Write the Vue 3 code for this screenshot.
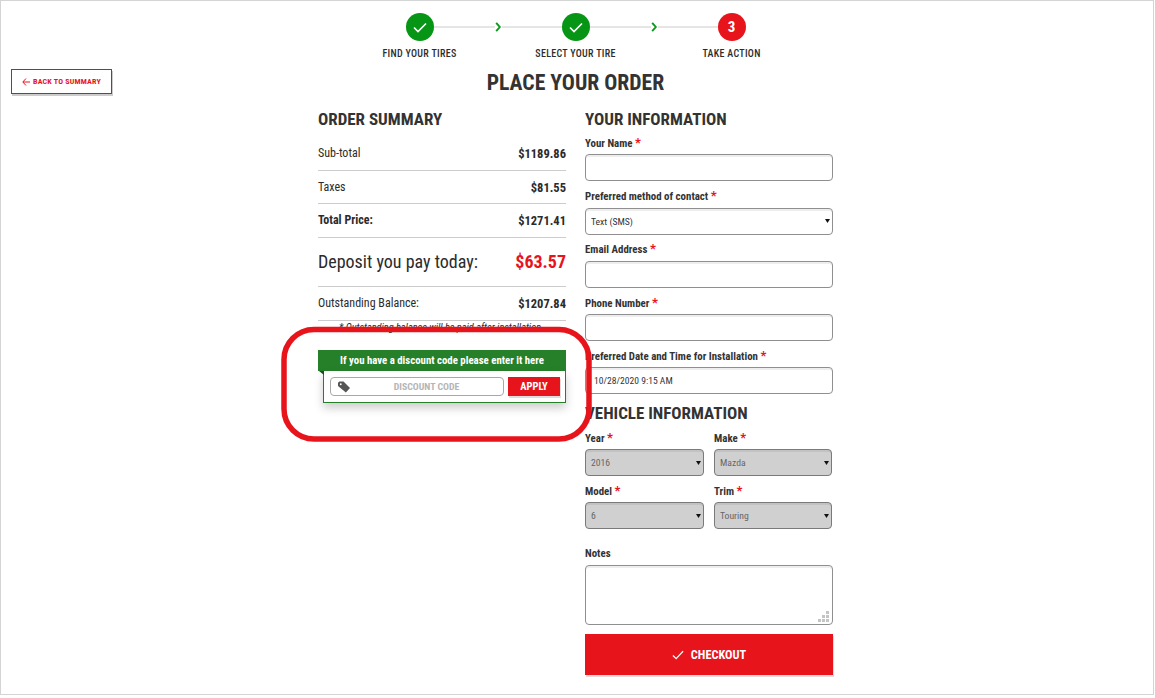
<template>
  <div class="page">
    <div class="steps">
      <div class="step">
        <span class="dot done"><svg width="14" height="11" viewBox="0 0 14 11"><path d="M1 5.500 5 9.500 13 1.500" fill="none" stroke="#fff" stroke-width="1.600" /></svg></span>
        <span class="step-name">FIND YOUR TIRES</span>
        <svg class="chevron" width="7" height="10" viewBox="0 0 7 10"><path d="M1.200 .8 4.800 5 1.200 9.200" fill="none" stroke="#0a9a1a" stroke-width="1.900" /></svg>
      </div>
      <div class="step">
        <span class="dot done"><svg width="14" height="11" viewBox="0 0 14 11"><path d="M1 5.500 5 9.500 13 1.500" fill="none" stroke="#fff" stroke-width="1.600" /></svg></span>
        <span class="step-name">SELECT YOUR TIRE</span>
        <svg class="chevron" width="7" height="10" viewBox="0 0 7 10"><path d="M1.200 .8 4.800 5 1.200 9.200" fill="none" stroke="#0a9a1a" stroke-width="1.900" /></svg>
      </div>
      <div class="step">
        <span class="dot now">3</span>
        <span class="step-name">TAKE ACTION</span>
      </div>
    </div>

    <div class="title-row">
      <button class="back">
        <svg width="8" height="8" viewBox="0 0 8 8"><path d="M4 .5.8 4 4 7.500M1 4h7" fill="none" stroke="#e8141c" stroke-width="1" /></svg>
        BACK TO SUMMARY
      </button>
      <h1>PLACE YOUR ORDER</h1>
    </div>

    <div class="columns">
      <section class="summary">
        <h2>ORDER SUMMARY</h2>
        <div class="row" v-for="r in rows" :key="r.name" :class="r.cls">
          <span class="row-name">{{ r.name }}</span>
          <span class="row-value">{{ r.value }}</span>
        </div>
        <p class="note">* Outstanding balance will be paid after installation</p>

        <div class="discount">
          <div class="discount-head">If you have a discount code please enter it here</div>
          <div class="discount-body">
            <div class="code">
              <svg width="12" height="12" viewBox="0 0 13 12"><path d="M0 1.500 1.500 0H6l7 7-4.500 5L0 5Z" fill="#555" /><circle cx="3" cy="3" r="1" fill="#fff" /></svg>
              <input placeholder="DISCOUNT CODE" />
            </div>
            <button class="apply">APPLY</button>
          </div>
        </div>
      </section>

      <section class="info">
        <h2>YOUR INFORMATION</h2>
        <label class="field">
          <span>Your Name <i>*</i></span>
          <input type="text" />
        </label>
        <label class="field">
          <span>Preferred method of contact <i>*</i></span>
          <select><option>Text (SMS)</option></select>
        </label>
        <label class="field">
          <span>Email Address <i>*</i></span>
          <input type="text" />
        </label>
        <label class="field">
          <span>Phone Number <i>*</i></span>
          <input type="text" />
        </label>
        <label class="field">
          <span>Preferred Date and Time for Installation <i>*</i></span>
          <input type="text" class="date" value="10/28/2020 9:15 AM" />
        </label>

        <h2 class="second">VEHICLE INFORMATION</h2>
        <div class="pair">
          <label class="field" v-for="s in vehicle" :key="s.name">
            <span>{{ s.name }} <i>*</i></span>
            <select class="locked" disabled><option>{{ s.value }}</option></select>
          </label>
        </div>

        <label class="field notes">
          <span>Notes</span>
          <textarea></textarea>
          <svg class="grip" width="12" height="12" viewBox="0 0 12 12" fill="#c4c4c4">
            <rect x="8" y="0" width="3" height="3" />
            <rect x="4" y="4" width="3" height="3" />
            <rect x="8" y="4" width="3" height="3" />
            <rect x="0" y="8" width="3" height="3" />
            <rect x="4" y="8" width="3" height="3" />
            <rect x="8" y="8" width="3" height="3" />
          </svg>
        </label>

        <button class="checkout">
          <svg width="12" height="10" viewBox="0 0 13 10"><path d="M1 5.500 4.500 9 12 1" fill="none" stroke="#fff" stroke-width="1.400" /></svg>
          CHECKOUT
        </button>
      </section>
    </div>

    <svg class="circle-mark" width="316" height="122" viewBox="0 0 316 122">
      <rect x="5" y="4.500" width="305" height="109.500" rx="30" fill="none" stroke="#e8141c" stroke-width="5.500" />
    </svg>
  </div>
</template>

<script setup>
const rows = [
  { name: 'Sub-total', value: '$1189.86', cls: 'r-sub' },
  { name: 'Taxes', value: '$81.55', cls: 'r-tax' },
  { name: 'Total Price:', value: '$1271.41', cls: 'r-total' },
  { name: 'Deposit you pay today:', value: '$63.57', cls: 'r-deposit' },
  { name: 'Outstanding Balance:', value: '$1207.84', cls: 'r-balance' },
];

const vehicle = [
  { name: 'Year', value: '2016' },
  { name: 'Make', value: 'Mazda' },
  { name: 'Model', value: '6' },
  { name: 'Trim', value: 'Touring' },
];
</script>

<style>
html,
body {
  margin: 0;
  background: #fff;
}
</style>

<style scoped>
.page {
  position: relative;
  box-sizing: border-box;
  width: 1154px;
  height: 695px;
  border: 1px solid #d4d4d4;
  padding: 12px 3px 0 0;
  overflow: hidden;
  background: #fff;
  color: #2b2b2b;
  font-family: Roboto, sans-serif;
  font-stretch: 75%;
}

.steps {
  display: flex;
  justify-content: center;
  height: 48px;
}

.step {
  position: relative;
  width: 156px;
  display: flex;
  flex-direction: column;
  align-items: center;
}

.step:not(:last-child)::after {
  content: '';
  position: absolute;
  left: 50%;
  top: 13px;
  width: 100%;
  height: 2px;
  background: #e5e5e5;
}

.chevron {
  position: absolute;
  z-index: 1;
  left: 100%;
  top: 9px;
  margin-left: -3px;
  background: #fff;
}

.dot {
  position: relative;
  z-index: 1;
  width: 28px;
  height: 28px;
  border-radius: 50%;
  display: flex;
  align-items: center;
  justify-content: center;
  color: #fff;
  font-weight: 700;
  font-size: 15px;
}

.done {
  background: #069515;
}

.now {
  background: #e8141c;
}

.step-name {
  margin-top: 7px;
  font-size: 10px;
  font-weight: 500;
  letter-spacing: 0.3px;
  line-height: 12px;
  white-space: nowrap;
}

.title-row {
  display: grid;
  grid-template-columns: 1fr auto 1fr;
  align-items: center;
  height: 25px;
  margin-top: 9px;
}

.back {
  justify-self: start;
  margin: -2px 0 0 10px;
  width: 101px;
  height: 25px;
  border: 1px solid #d9141c;
  background: #fff;
  box-shadow: 1px 2px 0 #ccc;
  color: #e8141c;
  font-family: inherit;
  font-stretch: inherit;
  font-size: 8px;
  font-weight: 700;
  letter-spacing: 0.2px;
  padding: 0;
  display: flex;
  align-items: center;
  justify-content: center;
  gap: 3px;
}

h1 {
  grid-column: 2;
  margin: 0;
  font-size: 21.700px;
  font-weight: 700;
  line-height: 25px;
  color: #333;
}

.columns {
  display: flex;
  justify-content: center;
  gap: 19px;
  margin-top: 13px;
}

h2 {
  margin: 0;
  font-size: 17px;
  font-weight: 700;
  line-height: 22px;
  color: #333;
}

.summary,
.info {
  width: 248px;
}

.row {
  box-sizing: border-box;
  display: flex;
  justify-content: space-between;
  align-items: center;
  border-bottom: 1px solid #ccc;
  font-size: 12px;
}

.row-value {
  font-weight: 700;
  font-size: 12.500px;
}

.r-sub {
  height: 40px;
  margin-top: 1px;
  padding-top: 5px;
}

.r-tax {
  height: 33px;
}

.r-total {
  height: 34px;
  padding-bottom: 1px;
}

.r-total .row-name {
  font-weight: 700;
}

.r-deposit {
  height: 49px;
  padding-bottom: 2px;
}

.r-deposit .row-name {
  font-size: 18px;
}

.r-deposit .row-value {
  font-size: 18px;
  color: #e8141c;
}

.r-balance {
  height: 34px;
  padding-bottom: 1px;
}

.note {
  margin: 0;
  padding-right: 4px;
  font-size: 10.300px;
  font-style: italic;
  line-height: 13px;
  text-align: center;
}

.discount {
  margin-top: 16px;
}

.discount-head {
  height: 21px;
  line-height: 21px;
  background: #26802a;
  color: #fff;
  text-align: center;
  font-size: 10.800px;
  font-weight: 700;
}

.discount-body {
  position: relative;
  box-sizing: border-box;
  height: 32px;
  margin-left: 5px;
  border: 1px solid #26802a;
  border-top: 0;
  box-shadow: 0 5px 10px rgba(0, 0, 0, 0.2);
  display: flex;
  gap: 4px;
  padding: 6px 5px 0 6px;
  background: #fff;
}

.discount-body::before {
  content: '';
  position: absolute;
  left: -5px;
  top: 0;
  border-top: 4px solid #14501a;
  border-left: 5px solid transparent;
}

.code {
  box-sizing: border-box;
  width: 174px;
  height: 19px;
  border: 1px solid #a8a8a8;
  border-radius: 4px;
  display: flex;
  align-items: center;
  padding-left: 7px;
}

.code input {
  flex: 1;
  min-width: 0;
  border: 0;
  outline: 0;
  background: none;
  padding: 0;
  text-align: center;
  font-family: inherit;
  font-stretch: inherit;
  font-size: 9.800px;
  font-weight: 700;
}

.code input::placeholder {
  color: #b5b5b5;
}

.apply {
  width: 52px;
  height: 19px;
  border: 0;
  padding: 0;
  background: #e8141c;
  box-shadow: 1px 2px 0 #ddd;
  color: #fff;
  font-family: inherit;
  font-stretch: inherit;
  font-size: 10.500px;
  font-weight: 700;
}

.field {
  display: block;
}

.field > span {
  display: block;
  font-size: 10.900px;
  font-weight: 700;
  line-height: 14px;
  margin-bottom: 3.400px;
  color: #333;
}

.field > span i {
  color: #e8141c;
  font-style: normal;
  font-size: 13px;
}

.info > .field {
  margin-top: 6px;
}

.info > .field + .field {
  margin-top: 7.800px;
}

.field input,
.field select,
.field textarea {
  display: block;
  box-sizing: border-box;
  width: 100%;
  height: 27px;
  border: 1px solid #8f8f8f;
  border-radius: 4px;
  background-color: #fff;
  box-shadow: inset 0 2px 0 #eee;
  padding: 0 5px;
  font-family: inherit;
  font-stretch: inherit;
  font-size: 9.700px;
  color: #333;
}

.field select {
  appearance: none;
  background-image: url("data:image/svg+xml,%3Csvg xmlns='http://www.w3.org/2000/svg' width='5' height='4'%3E%3Cpath d='M0 0h5L2.500 4Z' fill='%23111'/%3E%3C/svg%3E");
  background-repeat: no-repeat;
  background-position: right 2px center;
}

.field .date {
  padding-left: 8px;
  font-size: 9.600px;
}

.second {
  margin-top: 8px;
}

.pair {
  display: grid;
  grid-template-columns: 119px 118px;
  column-gap: 10px;
  row-gap: 7.600px;
  margin-top: 6.600px;
}

.field .locked {
  background-color: #d0d0d0;
  border-color: #7a7a7a;
  box-shadow: inset 0 2px 0 #c2c2c2;
  color: #666;
  opacity: 1;
}

.info > .field.notes {
  position: relative;
  margin-top: 18px;
}

.field.notes > span {
  margin-bottom: 4px;
}

.field textarea {
  height: 60px;
  resize: none;
}

.grip {
  position: absolute;
  right: 3px;
  bottom: 2px;
}

.checkout {
  display: flex;
  align-items: center;
  justify-content: center;
  gap: 7px;
  width: 100%;
  height: 41px;
  margin-top: 9px;
  border: 0;
  background: #e8141c;
  box-shadow: 1px 2px 0 #ddd;
  color: #fff;
  font-family: inherit;
  font-stretch: inherit;
  font-size: 12.300px;
  font-weight: 700;
}

.circle-mark {
  position: absolute;
  left: 278px;
  top: 324px;
}
</style>
